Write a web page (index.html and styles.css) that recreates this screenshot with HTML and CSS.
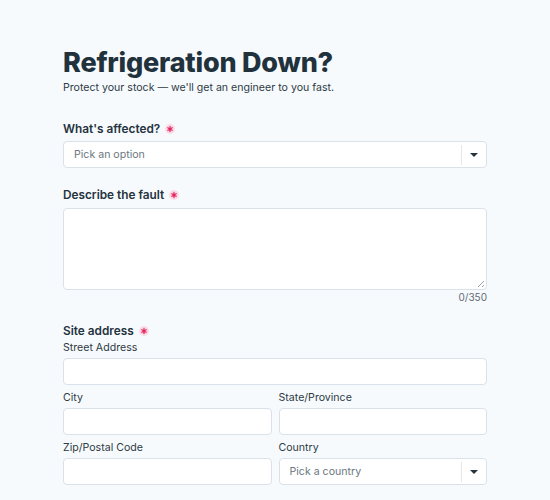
FILE: index.html
```html
<!DOCTYPE html>
<html>
<head>
<meta charset="utf-8">
<link rel="stylesheet" href="styles.css">
</head>
<body>
<main class="form">
  <h1 class="title">Refrigeration Down?</h1>
  <p class="subtitle">Protect your stock — we'll get an engineer to you fast.</p>

  <section class="field field-select">
    <div class="label">What's affected? <svg class="req" viewBox="0 0 10 10" aria-label="required"><circle cx="5" cy="5" r="5" fill="#fbdbe6"/><path d="M5 2.4V7.6M2.8 3.7L7.2 6.3M2.8 6.3L7.2 3.7" stroke="#e3245f" stroke-width="1.2" stroke-linecap="round"/></svg></div>
    <div class="select">
      <span class="placeholder">Pick an option</span>
      <span class="divider"></span>
      <span class="caret"></span>
    </div>
  </section>

  <section class="field field-text">
    <div class="label">Describe the fault <svg class="req" viewBox="0 0 10 10" aria-label="required"><circle cx="5" cy="5" r="5" fill="#fbdbe6"/><path d="M5 2.4V7.6M2.8 3.7L7.2 6.3M2.8 6.3L7.2 3.7" stroke="#e3245f" stroke-width="1.2" stroke-linecap="round"/></svg></div>
    <div class="textarea"><span class="grip"></span></div>
    <div class="counter">0/350</div>
  </section>

  <section class="field field-address">
    <div class="label">Site address <svg class="req" viewBox="0 0 10 10" aria-label="required"><circle cx="5" cy="5" r="5" fill="#fbdbe6"/><path d="M5 2.4V7.6M2.8 3.7L7.2 6.3M2.8 6.3L7.2 3.7" stroke="#e3245f" stroke-width="1.2" stroke-linecap="round"/></svg></div>
    <div class="sub">
      <div class="sublabel">Street Address</div>
      <div class="input"></div>
    </div>
    <div class="row">
      <div class="sub">
        <div class="sublabel">City</div>
        <div class="input"></div>
      </div>
      <div class="sub">
        <div class="sublabel">State/Province</div>
        <div class="input"></div>
      </div>
    </div>
    <div class="row">
      <div class="sub">
        <div class="sublabel">Zip/Postal Code</div>
        <div class="input"></div>
      </div>
      <div class="sub">
        <div class="sublabel">Country</div>
        <div class="select">
          <span class="placeholder">Pick a country</span>
          <span class="divider"></span>
          <span class="caret"></span>
        </div>
      </div>
    </div>
  </section>
</main>
</body>
</html>
```

FILE: styles.css
```css
* { box-sizing: border-box; }
html, body { margin: 0; padding: 0; }
body {
  background: #f7fafd;
  font-family: Inter, "Noto Sans", sans-serif;
  color: #24333d;
}
.form {
  width: 424px;
  margin-left: 63px;
  padding-top: 45px;
}
.title {
  margin: 0;
  font-size: 27px;
  line-height: 36px;
  font-weight: 800;
  letter-spacing: -0.2px;
  color: #22323c;
}
.subtitle {
  margin: -1px 0 0;
  font-size: 10.6px;
  line-height: 16px;
  color: #2e3b44;
}
.field-select { margin-top: 24px; }
.field-text { margin-top: 18px; }
.field-address { margin-top: 18px; }
.label {
  font-size: 11.8px;
  line-height: 18px;
  font-weight: 600;
  color: #24333d;
  display: flex;
  align-items: center;
  gap: 5px;
}
.req {
  width: 10px;
  height: 10px;
  flex: none;
}
.field-select .select { margin-top: 3px; }
.field-text .textarea { margin-top: 4px; }
.select, .input {
  height: 27px;
  background: #fff;
  border: 1px solid #d9e2ea;
  border-radius: 4px;
}
.select {
  display: flex;
  align-items: center;
  padding-left: 10px;
}
.placeholder {
  flex: 1;
  font-size: 10.6px;
  color: #6b7780;
}
.divider {
  width: 1px;
  height: 20px;
  background: #e2e8ee;
}
.caret {
  width: 24px;
  display: flex;
  justify-content: center;
}
.caret::before {
  content: "";
  border-left: 4px solid transparent;
  border-right: 4px solid transparent;
  border-top: 4px solid #24333d;
}
.textarea {
  height: 82px;
  background: #fff;
  border: 1px solid #d9e2ea;
  border-radius: 4px;
  position: relative;
}
.grip {
  position: absolute;
  right: 2px;
  bottom: 2px;
  width: 6px;
  height: 6px;
  background: linear-gradient(135deg, transparent 45%, #9aa3aa 45%, #9aa3aa 55%, transparent 55%, transparent 75%, #9aa3aa 75%, #9aa3aa 85%, transparent 85%);
}
.counter {
  text-align: right;
  font-size: 10px;
  line-height: 14px;
  margin-top: 0;
  color: #5f6b73;
}
.sub { flex: 1; min-width: 0; }
.sublabel {
  font-size: 10.6px;
  line-height: 14px;
  color: #2e3b44;
  margin-top: 6px;
  margin-bottom: 3px;
}
.field-address > .sub .sublabel { margin-top: 1px; }
.row {
  display: flex;
  gap: 7px;
}
```
